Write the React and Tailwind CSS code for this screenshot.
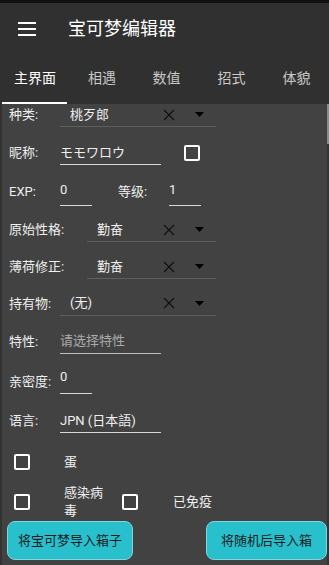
import React from "react";

const FONT = { fontFamily: 'Roboto, "Noto Sans CJK SC", sans-serif' };

function XIcon() {
  return (
    <svg width="12" height="12" viewBox="0 0 12 12" className="block">
      <path d="M1 1 L11 11 M11 1 L1 11" stroke="#111" strokeWidth="1.3" />
    </svg>
  );
}

function Caret() {
  return (
    <svg width="9" height="5" viewBox="0 0 9 5" className="block">
      <path d="M0 0 L9 0 L4.5 5 Z" fill="#000" />
    </svg>
  );
}

function Select({ value, start, textPad }) {
  return (
    <div
      className="flex items-center h-6 border-b border-[#5e5e5e]"
      style={{ width: 216 - start }}
    >
      <span className="flex-1 text-[13px] text-[#eeeeee]" style={{ paddingLeft: textPad }}>
        {value}
      </span>
      <span className="w-[12px] flex justify-center mr-[20px]">
        <XIcon />
      </span>
      <span className="mr-[12px]">
        <Caret />
      </span>
    </div>
  );
}

function Box() {
  return <div className="w-4 h-4 border-2 border-white rounded-[2px] shrink-0" />;
}

export default function App() {
  return (
    <div className="w-[329px] h-[565px] overflow-hidden bg-[#424242] flex flex-col" style={FONT}>
      <div className="h-[3px] bg-[#111111]" />
      {/* header */}
      <div className="bg-[#303030] h-[101px] flex flex-col">
        <div className="h-[52px] flex items-center">
          <div className="ml-[18px] w-[18px] flex flex-col gap-[4px]">
            <div className="h-[2px] bg-white" />
            <div className="h-[2px] bg-white" />
            <div className="h-[2px] bg-white" />
          </div>
          <div className="ml-[32px] text-[18px] text-white leading-none">宝可梦编辑器</div>
        </div>
        <div className="flex-1 flex flex-col">
          <div className="flex-1 flex items-center">
            <div className="w-[70px] text-center text-[14px] text-white">主界面</div>
            <div className="w-[64px] text-center text-[14px] text-[#c8c8c8]">相遇</div>
            <div className="w-[65px] text-center text-[14px] text-[#c8c8c8]">数值</div>
            <div className="w-[65px] text-center text-[14px] text-[#c8c8c8]">招式</div>
            <div className="w-[65px] text-center text-[14px] text-[#c8c8c8]">体貌</div>
          </div>
          <div className="h-[2px] flex">
            <div className="w-[2px]" />
            <div className="w-[65px] bg-white" />
          </div>
        </div>
      </div>
      {/* body */}
      <div className="flex-1 flex">
        <div className="w-[2px] bg-[#333333]" />
        <div className="flex-1 flex flex-col text-[13px] text-[#eeeeee]">
          {/* 种类 */}
          <div className="h-[30px] pb-[8px] flex items-center pl-[7px]">
            <span className="w-[51px]">种类:</span>
            <Select value="桃歹郎" start={60} textPad={10} />
          </div>
          {/* 昵称 */}
          <div className="h-[38px] flex items-center pl-[7px]">
            <span className="w-[51px]">昵称:</span>
            <div className="w-[101px] h-6 border-b border-[#d8d8d8] flex items-center">モモワロウ</div>
            <div className="ml-[23px]">
              <Box />
            </div>
          </div>
          {/* EXP */}
          <div className="h-[38px] pt-[2px] flex items-center pl-[7px]">
            <span className="w-[51px]">EXP:</span>
            <div className="w-[32px] h-[28px] border-b border-[#d8d8d8] pt-[2px]">0</div>
            <span className="ml-[26px] w-[51px]">等级:</span>
            <div className="w-[32px] h-[28px] border-b border-[#d8d8d8] pt-[2px]">1</div>
          </div>
          {/* 原始性格 */}
          <div className="h-[38px] pt-[2px] flex items-center pl-[7px]">
            <span className="w-[78px]">原始性格:</span>
            <Select value="勤奋" start={87} textPad={10} />
          </div>
          {/* 薄荷修正 */}
          <div className="h-[37px] pt-[1px] flex items-center pl-[7px]">
            <span className="w-[78px]">薄荷修正:</span>
            <Select value="勤奋" start={87} textPad={10} />
          </div>
          {/* 持有物 */}
          <div className="h-[37px] flex items-center pl-[7px]">
            <span className="w-[51px]">持有物:</span>
            <Select value="(无)" start={60} textPad={10} />
          </div>
          {/* 特性 */}
          <div className="h-[39px] flex items-center pl-[7px]">
            <span className="w-[51px]">特性:</span>
            <div className="w-[101px] h-6 border-b border-[#bdbdbd] flex items-center text-[#aaaaaa]">请选择特性</div>
          </div>
          {/* 亲密度 */}
          <div className="h-[39px] pt-[2px] flex items-center pl-[7px]">
            <span className="w-[51px]">亲密度:</span>
            <div className="w-[32px] h-6 border-b border-[#d8d8d8] leading-none">0</div>
          </div>
          {/* 语言 */}
          <div className="h-[41px] pt-[1px] flex items-center pl-[7px]">
            <span className="w-[51px]">语言:</span>
            <div className="w-[101px] h-6 border-b border-[#d8d8d8] flex items-center">JPN (日本語)</div>
          </div>
          {/* 蛋 */}
          <div className="h-[41px] flex items-center pl-[12px]">
            <Box />
            <span className="ml-[34px]">蛋</span>
          </div>
          {/* 感染病毒 */}
          <div className="h-[39px] flex items-center pl-[12px]">
            <Box />
            <span className="ml-[34px] w-[42px] leading-[18px]">感染病毒</span>
            <div className="ml-[16px]">
              <Box />
            </div>
            <span className="ml-[35px]">已免疫</span>
          </div>
          {/* buttons */}
          <div className="h-[39px] flex justify-between pl-[5px] pr-0">
            <button className="w-[126px] h-[39px] rounded-[8px] bg-[#29c0ce] border border-[#7fd6de] text-[13px] text-[#1c1c1c]">
              将宝可梦导入箱子
            </button>
            <button className="w-[121px] h-[39px] rounded-[8px] bg-[#29c0ce] border border-[#7fd6de] text-[13px] text-[#1c1c1c]">
              将随机后导入箱
            </button>
          </div>
        </div>
        <div className="w-[2px] bg-[#333333] flex flex-col">
          <div className="h-[40px] bg-[#8a8a8a]" />
        </div>
      </div>
    </div>
  );
}
